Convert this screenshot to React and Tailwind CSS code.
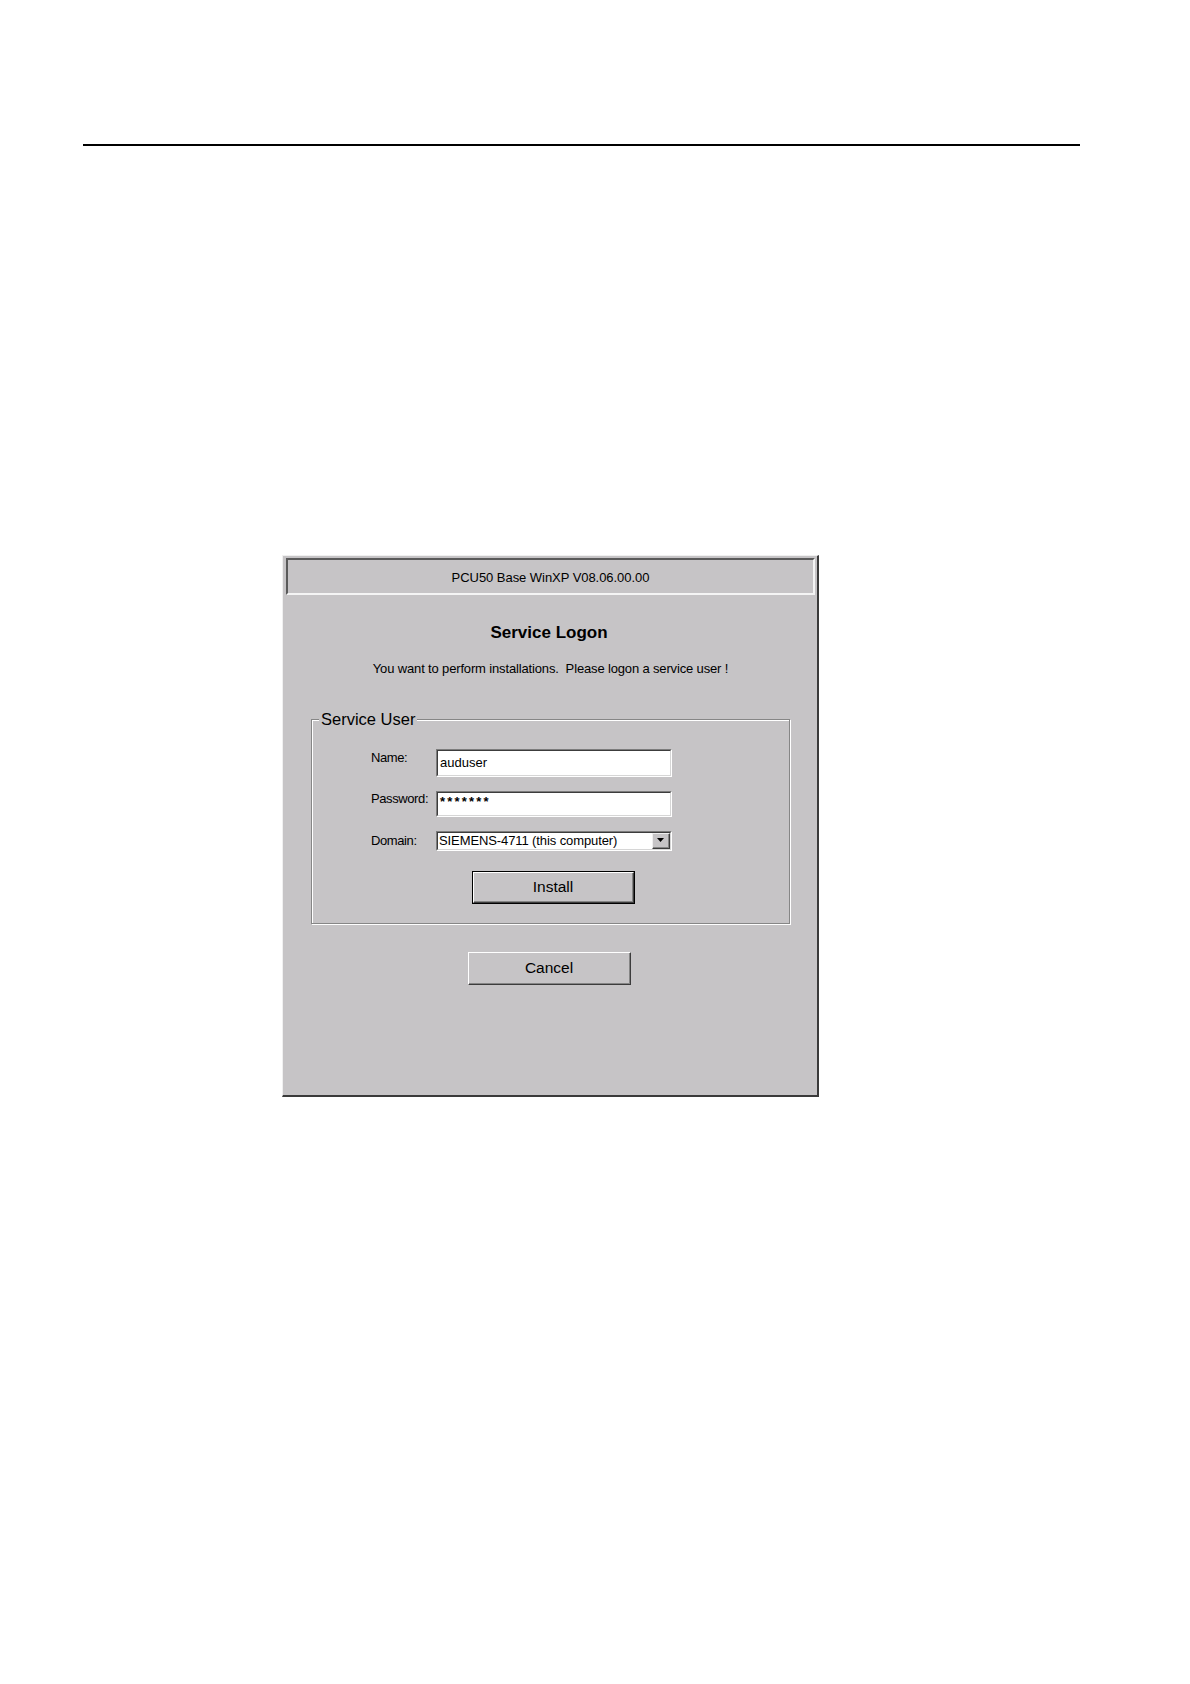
import React from "react";

function Sunken({ className = "", innerClass = "", children }) {
  return (
    <div className={"border-t border-l border-t-[#7c7c7c] border-l-[#7c7c7c] border-r border-b border-r-white border-b-white " + className}>
      <div className={"h-full w-full border-t border-l border-t-[#3c3c3c] border-l-[#3c3c3c] border-r border-b border-r-[#d6d6d6] border-b-[#d6d6d6] bg-white " + innerClass}>
        {children}
      </div>
    </div>
  );
}

function RaisedButton({ children, isDefault = false }) {
  const inner = (
    <div className="h-full w-full border-t border-l border-t-white border-l-white border-r border-b border-r-[#3c3c3c] border-b-[#3c3c3c]">
      <div className="flex h-full w-full items-center justify-center border-r border-b border-r-[#858585] border-b-[#858585] text-[15.5px] leading-[18px]">
        {children}
      </div>
    </div>
  );
  if (isDefault) {
    return <div className="h-[33px] w-[163px] border border-black">{inner}</div>;
  }
  return <div className="h-[33px] w-[163px]">{inner}</div>;
}

export default function App() {
  return (
    <div className="min-h-[1684px] w-full bg-white font-['Liberation_Sans',Arial,sans-serif] text-black">
      <div className="pt-[144px] pl-[83px]">
        <div className="h-[2px] w-[997px] bg-black" />
      </div>

      <div className="ml-[282px] mt-[409px] flex h-[542px] w-[537px] flex-col border-t border-l border-t-[#f0f0f0] border-l-[#f0f0f0] border-r-2 border-b-2 border-r-[#3a3a3a] border-b-[#3a3a3a] bg-[#c6c4c6] pt-[2px] pl-[3px] pr-[2px]">
        {/* title bar */}
        <div className="flex h-[37px] w-full items-center justify-center border-t-2 border-l-2 border-t-[#5a5a5a] border-l-[#5a5a5a] border-r-2 border-b-2 border-r-[#f4f4f4] border-b-[#f4f4f4] pt-[2px] text-[13px] leading-[16px] tracking-[-0.05px]">
          PCU50 Base WinXP V08.06.00.00
        </div>

        <div className="mt-[28px] pr-[3px] text-center text-[17px] font-bold leading-[20px]">Service Logon</div>
        <div className="mt-[18px] text-center text-[13px] leading-[16px] tracking-[-0.15px] whitespace-pre">
          {"You want to perform installations.  Please logon a service user !"}
        </div>

        {/* group box */}
        <div className="relative mx-[25px] mt-[42px] h-[205px] border border-[#868686] pl-[59px] pt-[29px] shadow-[inset_1px_1px_0_#fff,1px_1px_0_#fff]">
          <span className="absolute left-[7px] top-[-11px] bg-[#c6c4c6] px-[2px] text-[16.5px] leading-[20px]">
            Service User
          </span>

          <div className="flex items-start">
            <div className="w-[65px] pt-[1px] text-[13px] leading-[16px] tracking-[-0.4px]">Name:</div>
            <Sunken className="h-[28px] w-[236px]" innerClass="flex items-center pl-[2px] text-[13px] leading-[16px]">
              auduser
            </Sunken>
          </div>

          <div className="mt-[14px] flex items-start">
            <div className="w-[65px] text-[13px] leading-[16px] tracking-[-0.4px]">Password:</div>
            <Sunken className="h-[26px] w-[236px]" innerClass="pl-[2px] pt-[1px] text-[13px] font-bold leading-[16px] tracking-[2.2px]">
              *******
            </Sunken>
          </div>

          <div className="mt-[14px] flex items-center">
            <div className="w-[65px] text-[13px] leading-[16px] tracking-[-0.4px]">Domain:</div>
            <Sunken className="h-[20px] w-[236px]" innerClass="flex items-center justify-between pl-[1px] text-[13px] leading-[16px]">
              <span className="tracking-[-0.1px]">SIEMENS-4711 (this computer)</span>
              <div className="h-[16px] w-[18px] border-t border-l border-t-[#efefef] border-l-[#efefef] border-r border-b border-r-[#3c3c3c] border-b-[#3c3c3c] bg-[#c6c4c6]">
                <div className="flex h-full w-full items-center justify-center border-r border-b border-r-[#858585] border-b-[#858585]">
                  <svg width="8" height="5" viewBox="0 0 8 5">
                    <path d="M0 0 H7 L3.5 4 Z" fill="#000" />
                  </svg>
                </div>
              </div>
            </Sunken>
          </div>

          <div className="ml-[101px] mt-[20px]">
            <RaisedButton isDefault>Install</RaisedButton>
          </div>
        </div>

        <div className="ml-[182px] mt-[28px]">
          <RaisedButton>Cancel</RaisedButton>
        </div>
      </div>
    </div>
  );
}
